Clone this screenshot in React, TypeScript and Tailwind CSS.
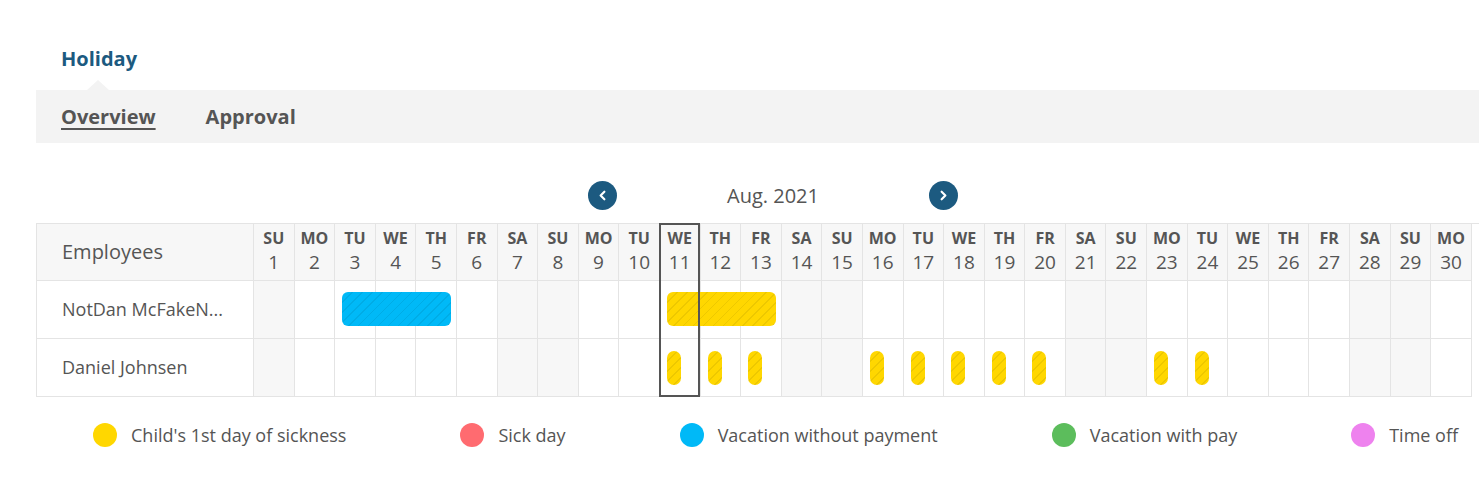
import { ChevronLeft, ChevronRight } from 'lucide-react';

const ABBR = ['SU', 'MO', 'TU', 'WE', 'TH', 'FR', 'SA'];
// only the days that fit in the visible strip
const DAYS = Array.from({ length: 30 }, (_, i) => ({
    n: i + 1,
    abbr: ABBR[i % 7],
    weekend: i % 7 === 0 || i % 7 === 6,
}));

const stripes =
    'bg-[repeating-linear-gradient(135deg,rgba(0,0,0,0.07)_0px,rgba(0,0,0,0.07)_1px,transparent_1px,transparent_7px)]';

const legend = [
    { label: "Child's 1st day of sickness", color: 'bg-[#ffd700]' },
    { label: 'Sick day', color: 'bg-[#ff6b70]' },
    { label: 'Vacation without payment', color: 'bg-[#00b9f7]' },
    { label: 'Vacation with pay', color: 'bg-[#5cbd5c]' },
    { label: 'Time off', color: 'bg-[#ee82ee]' },
];

function DayCell({ day, children }: { day: number; children?: React.ReactNode }) {
    const d = DAYS[day - 1];
    return (
        <div
            className={`relative h-[58px] border-r border-b border-[#e4e4e4] ${d.weekend ? 'bg-[#f7f7f7]' : 'bg-white'}`}
        >
            {children}
        </div>
    );
}

function Row({
    name,
    bars = [],
    pills = [],
}: {
    name: string;
    bars?: { from: number; to: number; color: string }[];
    pills?: number[];
}) {
    return (
        <>
            <div className="flex h-[58px] items-center border-r border-b border-[#e4e4e4] pl-[25px] pr-3 text-[18px] text-[#555]">
                <span className="truncate">{name}</span>
            </div>
            {DAYS.map((d) => {
                const bar = bars.find((b) => b.from === d.n);
                return (
                    <DayCell key={d.n} day={d.n}>
                        {bar && (
                            <div
                                className={`absolute top-[11px] left-[7px] z-10 h-[34px] rounded-[6px] ${bar.color} ${stripes}`}
                                style={{ width: (bar.to - bar.from + 1) * 40.6 - 13 }}
                            />
                        )}
                        {pills.includes(d.n) && (
                            <div
                                className={`absolute top-[12px] left-[7px] h-[34px] w-[14px] rounded-full bg-[#ffd700] ${stripes}`}
                            />
                        )}
                    </DayCell>
                );
            })}
        </>
    );
}

export default function App() {
    return (
        <div className="w-full overflow-hidden bg-white font-['Open_Sans',sans-serif] text-[#555]">
            <div className="w-[1560px] pl-[36px]">
                {/* title */}
                <div className="relative h-[90px] pt-[46px] pl-[25px]">
                    <h1 className="text-[20px] leading-[26px] font-bold text-[#1c5a80]">Holiday</h1>
                    <div className="absolute bottom-0 left-[51px] h-0 w-0 border-x-[11px] border-b-[10px] border-x-transparent border-b-[#f3f3f3]" />
                </div>

                {/* tabs */}
                <div className="flex h-[53px] items-center gap-[50px] bg-[#f3f3f3] pl-[25px] text-[20px] font-bold text-[#555]">
                    <span className="underline decoration-2 underline-offset-[4px]">Overview</span>
                    <span>Approval</span>
                </div>

                {/* month nav */}
                <div className="flex items-center pt-[38px] pb-[13px] pl-[552px]">
                    <button className="flex h-[29px] w-[29px] items-center justify-center rounded-full bg-[#1c5a80] text-white">
                        <ChevronLeft size={15} strokeWidth={3.5} />
                    </button>
                    <div className="w-[312px] text-center text-[20px] leading-[29px] text-[#555]">Aug. 2021</div>
                    <button className="flex h-[29px] w-[29px] items-center justify-center rounded-full bg-[#1c5a80] text-white">
                        <ChevronRight size={15} strokeWidth={3.5} />
                    </button>
                </div>

                {/* calendar */}
                <div className="relative">
                    <div className="grid grid-cols-[217px_repeat(30,40.6px)] border-t border-l border-[#e4e4e4]">
                        <div className="flex h-[57px] items-center border-r border-b border-[#e4e4e4] bg-[#f7f7f7] pl-[25px] text-[20px]">
                            Employees
                        </div>
                        {DAYS.map((d) => (
                            <div
                                key={d.n}
                                className="flex h-[57px] flex-col items-center justify-center border-r border-b border-[#e4e4e4] bg-[#f7f7f7] pb-[2px]"
                            >
                                <span className="text-[16px] leading-[22px] font-bold">{d.abbr}</span>
                                <span className="text-[19px] leading-[26px]">{d.n}</span>
                            </div>
                        ))}

                        <Row name="NotDan McFakeN..." bars={[
                            { from: 3, to: 5, color: 'bg-[#00b9f7]' },
                            { from: 11, to: 13, color: 'bg-[#ffd700]' },
                        ]} />
                        <Row name="Daniel Johnsen" pills={[11, 12, 13, 16, 17, 18, 19, 20, 23, 24]} />
                    </div>
                    {/* today marker */}
                    <div className="pointer-events-none absolute top-0 bottom-0 left-[623px] z-20 w-[41px] border-2 border-[#555]" />
                </div>

                {/* legend */}
                <div className="mt-[26px] flex items-center gap-[114px] pl-[57px]">
                    {legend.map((l) => (
                        <div key={l.label} className="flex items-center gap-[14px]">
                            <span className={`h-[24px] w-[24px] rounded-full ${l.color}`} />
                            <span className="text-[18px] leading-[24px]">{l.label}</span>
                        </div>
                    ))}
                </div>
            </div>
        </div>
    );
}
